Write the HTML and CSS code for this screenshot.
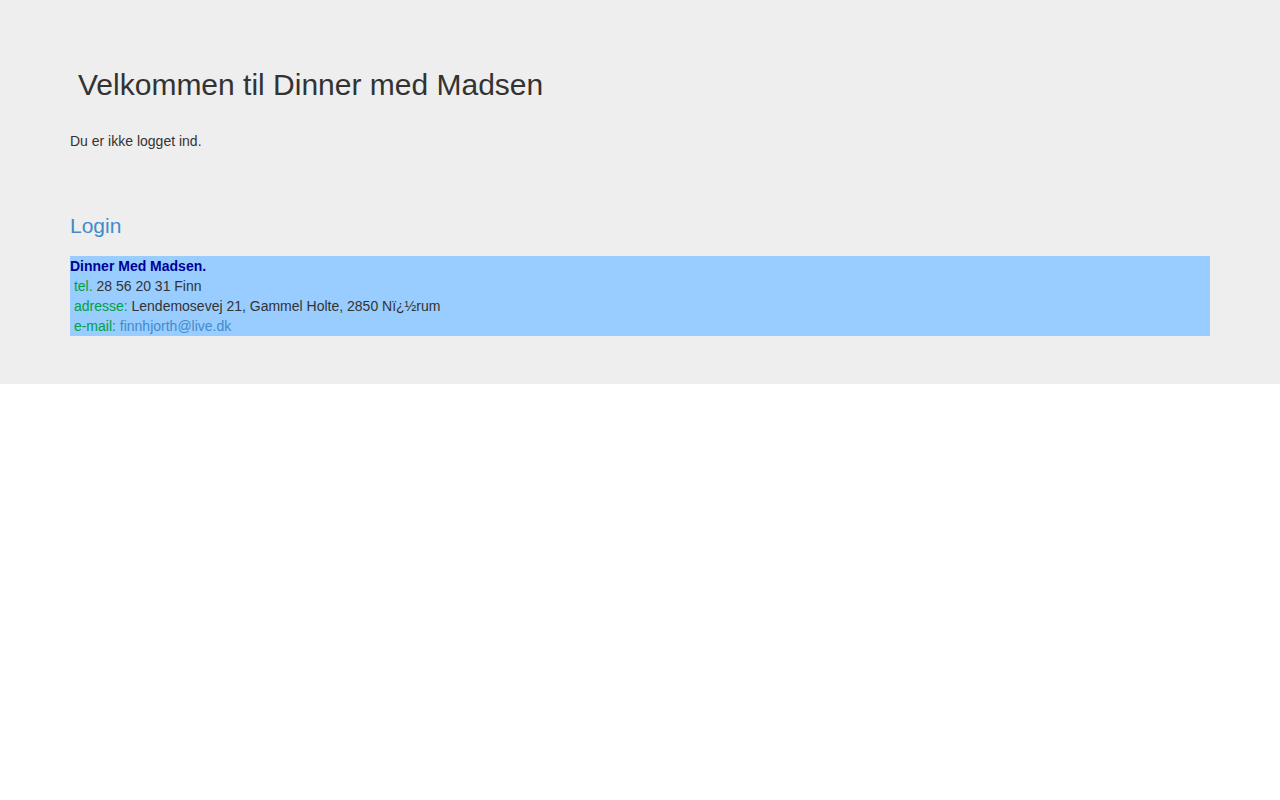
FILE: index.html
```html
<!DOCTYPE html>
<html>
    <head>
        <title>Dinner med Madsen</title>
        <link rel="stylesheet" href="styles.css">
    </head>
    <body>
        <div class="jumbotron">
            <div class="container">
                <h1>Velkommen til Dinner med Madsen</h1>
                <p class="status">Du er ikke logget ind.</p>

                <h3 class="login">Login</h3>

                <!-- contact info -->
                <table class="contact">
                    <tr><td class="name">Dinner Med Madsen.</td></tr>
                    <tr><td>&nbsp;<span class="label">tel.</span> 28 56 20 31 Finn</td></tr>
                    <tr><td>&nbsp;<span class="label">adresse:</span> Lendemosevej 21, Gammel Holte, 2850 N&iuml;&iquest;&frac12;rum</td></tr>
                    <tr><td>&nbsp;<span class="label">e-mail:</span> <a href="#">finnhjorth@live.dk</a></td></tr>
                </table>
            </div>
        </div>
    </body>
</html>
```

FILE: styles.css
```css
body {
    margin: 0;
    font-family: "Liberation Sans", Arial, sans-serif;
    font-size: 14px;
    line-height: 20px;
    color: #333;
    background-color: #fff;
}
.jumbotron {
    background-color: #eee;
    padding: 48px 0;
}
.container {
    width: 1140px;
    margin: 0 auto;
}
h1 {
    font-size: 30px;
    font-weight: normal;
    line-height: 36px;
    margin: 19px 0 0 8px;
}
.status {
    margin: 28px 0 0 0;
}
.login {
    color: #428bca;
    font-size: 21px;
    font-weight: normal;
    line-height: 24px;
    margin: 63px 0 18px 0;
}
.contact {
    width: 100%;
    border-collapse: collapse;
    background-color: #99ccff;
}
.contact td {
    padding: 0;
}
.contact .name {
    color: #000099;
    font-weight: bold;
}
.label {
    color: #00a040;
}
.contact a {
    color: #428bca;
    text-decoration: none;
}
```
